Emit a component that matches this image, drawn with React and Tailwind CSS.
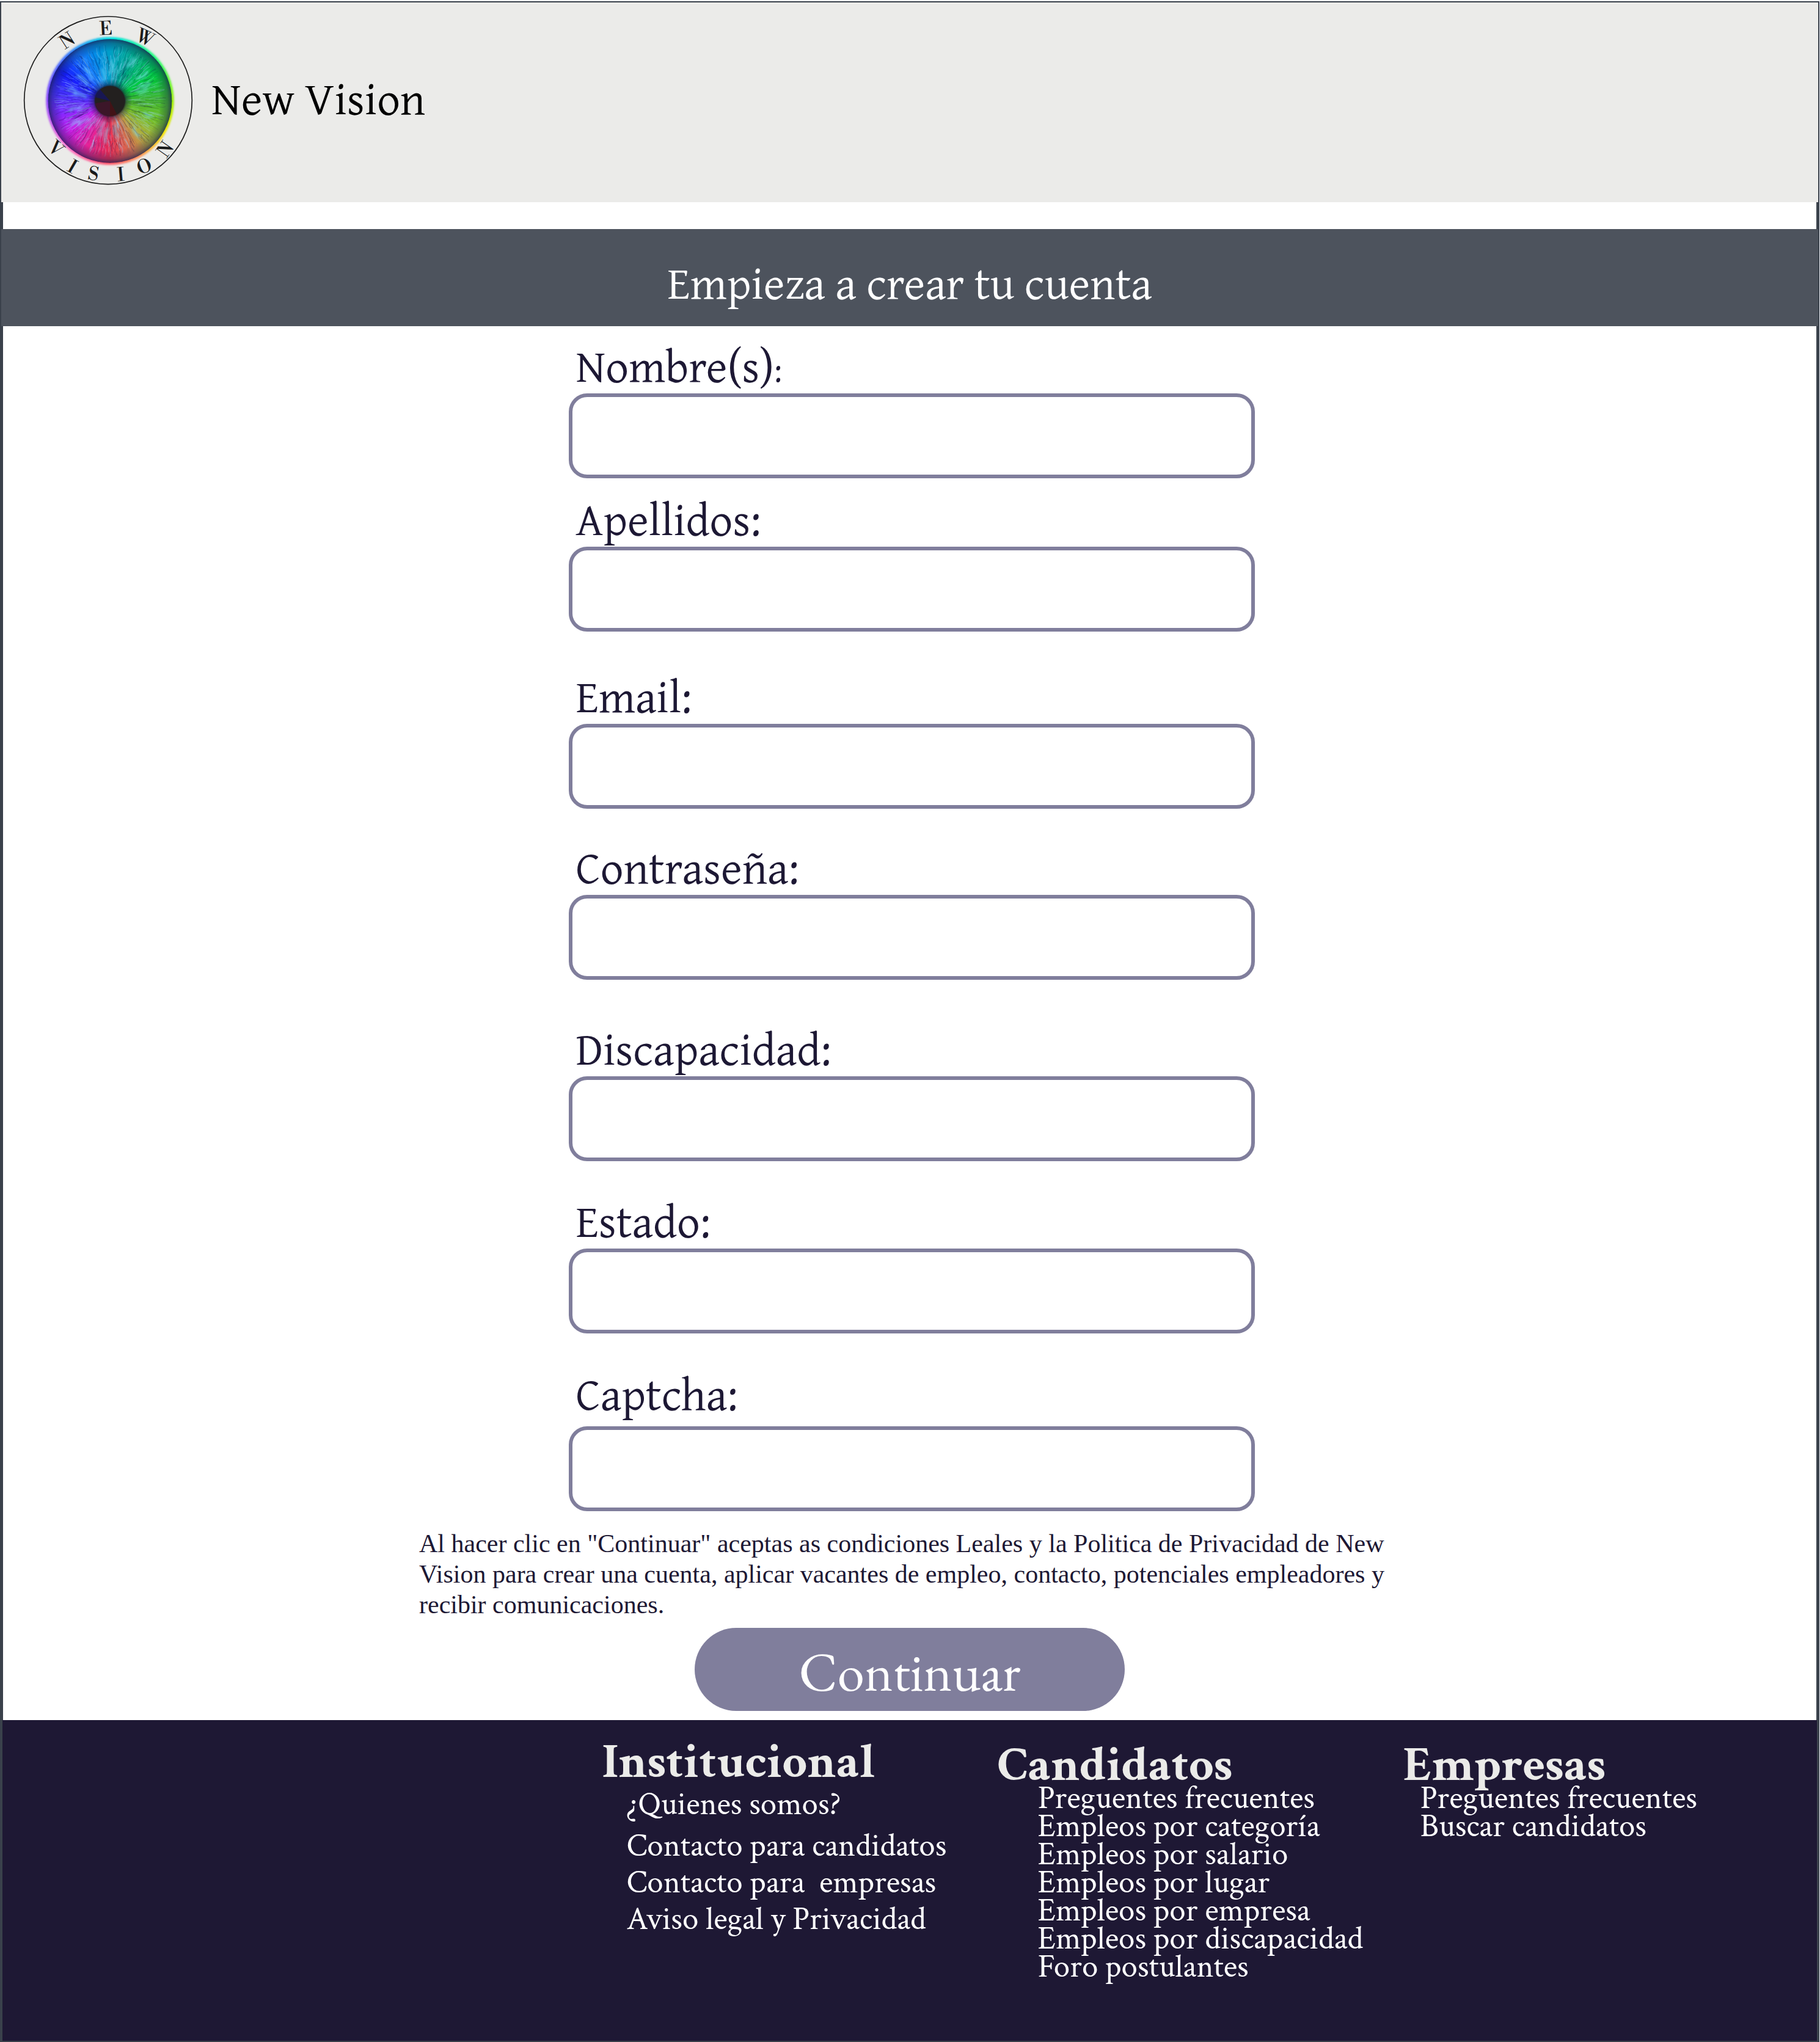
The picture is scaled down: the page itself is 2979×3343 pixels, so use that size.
import React from "react";

const SERIF = "font-['Gentium_Plus','Gentium_Book_Plus','Liberation_Serif',serif]";
const CRIMSON = "font-['Crimson_Text','Liberation_Serif',serif]";
const GARAMOND = "font-['EB_Garamond','Liberation_Serif',serif]";

const IRIS = [
  [0, 0, 160, 195], [30, 0, 170, 130], [60, 0, 205, 60], [85, 60, 180, 50],
  [110, 110, 195, 40], [135, 175, 175, 60], [155, 215, 115, 80], [180, 240, 45, 85],
  [205, 230, 35, 150], [235, 195, 30, 235], [255, 130, 40, 255], [275, 75, 50, 255],
  [300, 20, 30, 250], [325, 20, 120, 255], [345, 0, 145, 225], [360, 0, 160, 195],
];
const GLOW = [
  [0, 0, 225, 225], [45, 30, 255, 120], [90, 160, 240, 0], [118, 245, 230, 0],
  [150, 255, 150, 90], [180, 255, 90, 110], [225, 255, 120, 210], [270, 140, 70, 255],
  [315, 60, 120, 255], [360, 0, 225, 225],
];

function colourAt(stops, angle) {
  const i = Math.max(1, stops.findIndex((s) => s[0] >= angle));
  const a = stops[i - 1];
  const b = stops[i];
  const t = (angle - a[0]) / (b[0] - a[0]);
  const mix = [1, 2, 3].map((k) => Math.round(a[k] + (b[k] - a[k]) * t));
  return `rgb(${mix.join(",")})`;
}

const CX = 450;
const CY = 448;

function point(angle, radius) {
  const r = (angle * Math.PI) / 180;
  return [(CX + Math.sin(r) * radius).toFixed(1), (CY - Math.cos(r) * radius).toFixed(1)];
}

function noise(n) {
  const x = Math.sin(n * 127.1 + 11.7) * 43758.5453;
  return x - Math.floor(x);
}

const sectors = Array.from({ length: 120 }, (_, i) => i * 3);

function wedge(angle, radius) {
  return `M${CX} ${CY}L${point(angle - 0.4, radius).join(" ")}L${point(angle + 3.4, radius).join(" ")}Z`;
}

const fibres = Array.from({ length: 900 }, (_, i) => {
  const angle = noise(i) * 360;
  const start = 70 + noise(i + 900) * 160;
  const length = 25 + noise(i + 1800) * 55;
  const bend = (noise(i + 2700) - 0.5) * 10;
  const light = noise(i + 3600) > 0.45;
  const end = Math.min(start + length, 275);
  return {
    d: `M${point(angle, start).join(" ")}Q${point(angle + bend, (start + end) / 2).join(" ")} ${point(angle + bend * 0.4, end).join(" ")}`,
    stroke: light ? "#9fd8ff" : "#0a1040",
    opacity: light ? 0.1 + noise(i + 4500) * 0.2 : 0.08 + noise(i + 4500) * 0.16,
    width: 1.5 + noise(i + 5400) * 4,
  };
});

const sparkles = [
  [3, 165, 50], [28, 215, 45], [52, 205, 50], [66, 190, 45], [72, 165, 50], [110, 200, 40],
  [140, 200, 50], [168, 150, 60], [186, 170, 70], [196, 140, 70], [232, 165, 60], [238, 200, 40],
  [257, 175, 55], [281, 150, 60], [286, 190, 40], [308, 170, 60], [322, 170, 60], [346, 130, 60],
];

const letters = [
  ["N", 240, 152, -33], ["E", 430, 92, -3], ["W", 622, 137, 25],
  ["V", 184, 682, 42], ["I", 265, 771, 30], ["S", 369, 806, 10],
  ["I", 503, 810, -5], ["O", 619, 770, -22], ["N", 722, 686, -55],
];

function Logo() {
  return (
    <svg viewBox="0 0 888 888" role="img" aria-label="New Vision" className="size-[296px] shrink-0">
      <defs>
        <clipPath id="iris-clip"><circle cx={CX} cy={CY} r="304" /></clipPath>
        <filter id="soft"><feGaussianBlur stdDeviation="5" /></filter>
        <filter id="fine"><feGaussianBlur stdDeviation="1.5" /></filter>
        <filter id="spark"><feGaussianBlur stdDeviation="6" /></filter>
        <radialGradient id="shade" gradientUnits="userSpaceOnUse" cx={CX} cy={CY} r="305">
          <stop offset="0" stopColor="#1c1c22" stopOpacity="1" />
          <stop offset="0.23" stopColor="#1c1c22" stopOpacity="0.95" />
          <stop offset="0.27" stopColor="#14143a" stopOpacity="0.45" />
          <stop offset="0.36" stopColor="#14143a" stopOpacity="0" />
          <stop offset="0.8" stopColor="#0b1a50" stopOpacity="0" />
          <stop offset="0.93" stopColor="#14204a" stopOpacity="0.35" />
          <stop offset="1" stopColor="#1c2050" stopOpacity="0.75" />
        </radialGradient>
      </defs>
      <circle cx="441" cy="445" r="412" fill="none" stroke="#1a1a1a" strokeWidth="5" />
      <g filter="url(#soft)">
        {sectors.map((a) => <path key={a} d={wedge(a, 314)} fill={colourAt(GLOW, a)} />)}
      </g>
      <g clipPath="url(#iris-clip)">
        {sectors.map((a) => <path key={a} d={wedge(a, 320)} fill={colourAt(IRIS, a)} />)}
        <g fill="none" filter="url(#fine)">
          {fibres.map((f, i) => (
            <path key={i} d={f.d} stroke={f.stroke} strokeOpacity={f.opacity} strokeWidth={f.width} />
          ))}
        </g>
        <g fill="none" stroke="#7fe8ff" strokeOpacity="0.55" strokeWidth="12" strokeLinecap="round" filter="url(#spark)">
          {sparkles.map(([a, r, l]) => (
            <path key={a} d={`M${point(a - 2, r - l / 2).join(" ")}Q${point(a + 4, r).join(" ")} ${point(a, r + l / 2).join(" ")}`} />
          ))}
        </g>
        <circle cx={CX} cy={CY} r="305" fill="url(#shade)" />
        <circle cx={CX} cy={CY} r="74" fill="#23201f" />
        <path d={`M${CX} ${CY}L378 430A74 74 0 0 1 402 392Z`} fill="#14146a" opacity="0.7" />
        <path d={`M${CX} ${CY}L378 460A74 74 0 0 0 450 522Z`} fill="#42142c" opacity="0.8" />
        <path d={`M${CX} ${CY}L450 522A74 74 0 0 0 484 514Z`} fill="#4a1014" opacity="0.8" />
      </g>
      <g fill="#1a1a1a" fontSize="92" textAnchor="middle" fontFamily="'Libre Bodoni', 'Liberation Serif', serif">
        {letters.map(([c, x, y, r], i) => (
          <text key={i} transform={`translate(${x} ${y}) rotate(${r})`} y="31">{c}</text>
        ))}
      </g>
    </svg>
  );
}

const fields = [
  { id: "nombre", label: <>Nombre(s)<span className="text-[56px]">:</span></>, type: "text", space: "mt-[26px]", labelSpace: "" },
  { id: "apellidos", label: "Apellidos:", type: "text", space: "mt-7", labelSpace: "" },
  { id: "email", label: "Email:", type: "email", space: "mt-[67px]", labelSpace: "" },
  { id: "contrasena", label: "Contraseña:", type: "password", space: "mt-[57px]", labelSpace: "" },
  { id: "discapacidad", label: "Discapacidad:", type: "text", space: "mt-[74px]", labelSpace: "" },
  { id: "estado", label: "Estado:", type: "text", space: "mt-[59px]", labelSpace: "" },
  { id: "captcha", label: "Captcha:", type: "text", space: "mt-[60px]", labelSpace: "mb-2" },
];

function Field({ id, label, type, space, labelSpace }) {
  return (
    <div className={`flex flex-col ${space}`}>
      <label htmlFor={id} className={`h-[84px] pl-3 text-[75px] leading-[76px] ${labelSpace}`}>{label}</label>
      <input
        id={id}
        name={id}
        type={type}
        className="h-[139px] w-full rounded-[30px] border-[6px] border-[#807e9c] bg-white px-8 text-[56px] outline-none"
      />
    </div>
  );
}

const columns = [
  {
    title: "Institucional",
    top: "",
    list: "pl-10 leading-[60px]",
    firstItem: "mb-2",
    links: ["¿Quienes somos?", "Contacto para candidatos", "Contacto para  empresas", "Aviso legal y Privacidad"],
  },
  {
    title: "Candidatos",
    top: "pt-[5px]",
    list: "-mt-2 pl-[66px] leading-[46px]",
    firstItem: "",
    links: [
      "Preguentes frecuentes", "Empleos por categoría", "Empleos por salario", "Empleos por lugar",
      "Empleos por empresa", "Empleos por discapacidad", "Foro postulantes",
    ],
  },
  {
    title: "Empresas",
    top: "pt-[5px]",
    list: "-mt-2 pl-7 leading-[46px]",
    firstItem: "",
    links: ["Preguentes frecuentes", "Buscar candidatos"],
  },
];

export default function App() {
  return (
    <div className={`flex min-h-screen flex-col bg-[#f0f3fa] pt-[2px] pr-px text-[#1d1834] ${SERIF}`}>
      <div className="flex flex-1 flex-col border-2 border-[#3a414b] bg-white">
        <header className="flex h-[327px] items-center gap-5 bg-[#ebebe9] pb-2 pl-7">
          <Logo />
          <span className="pb-2 text-[75px] leading-[80px] text-black">New Vision</span>
        </header>

        <div className="h-11 border-x-[3px] border-[#3a414b]" />

        <h1 className="bg-[#4d535d] pt-[43px] pb-7 text-center text-[75px] leading-[88px] text-white">
          Empieza a crear tu cuenta
        </h1>

        <main className="border-x-[3px] border-[#3a414b]">
          <form className="flex flex-col items-center pb-[15px]" onSubmit={(e) => e.preventDefault()}>
            <div className="w-full max-w-[1129px] pl-[6px]">
              {fields.map((f) => <Field key={f.id} {...f} />)}
            </div>
            <p className="mt-7 w-full max-w-[1606px] font-['Liberation_Serif',serif] text-[42px] leading-[50px]">
              Al hacer clic en "Continuar" aceptas as condiciones Leales y la Politica de Privacidad de New
              Vision para crear una cuenta, aplicar vacantes de empleo, contacto, potenciales empleadores y
              recibir comunicaciones.
            </p>
            <button
              type="submit"
              className={`mt-[13px] h-[136px] w-full max-w-[704px] rounded-full bg-[#807e9c] pt-1.5 text-[89px] leading-none text-white ${GARAMOND}`}
            >
              Continuar
            </button>
          </form>
        </main>

        <footer className={`grid flex-1 grid-cols-[647px_664px_auto] items-start border-x-2 border-[#3a414b] bg-[#1e1834] pt-[29px] pb-20 pl-[33%] text-white ${CRIMSON}`}>
          {columns.map((c) => (
            <nav key={c.title} aria-label={c.title} className={c.top}>
              <h2 className="text-[80px] leading-[80px] font-bold text-[#ebebe9]">{c.title}</h2>
              <ul className={`text-[53px] ${c.list}`}>
                {c.links.map((l, i) => (
                  <li key={l} className={i === 0 ? c.firstItem : ""}>
                    <a href="#" className="whitespace-pre">{l}</a>
                  </li>
                ))}
              </ul>
            </nav>
          ))}
        </footer>
      </div>
    </div>
  );
}
